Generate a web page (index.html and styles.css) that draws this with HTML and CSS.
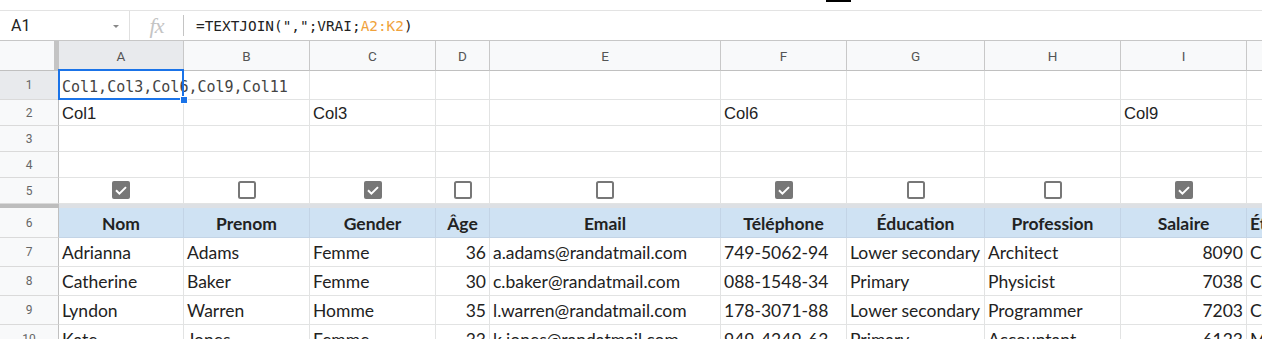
FILE: index.html
```html
<!DOCTYPE html>
<html lang="fr">
<head>
    <meta charset="UTF-8">
    <meta name="viewport" content="width=device-width, initial-scale=1.0">
    <title>Feuille de calcul</title>
    <link rel="stylesheet" href="styles.css">
</head>
<body>
    <div class="top-strip"><span class="tab-mark"></span></div>

    <div class="formula-bar">
        <div class="name-box">
            <span>A1</span>
            <span class="caret"></span>
        </div>
        <div class="fx">fx</div>
        <div class="divider"></div>
        <div class="formula">=TEXTJOIN(",";VRAI;<span class="range">A2:K2</span>)</div>
    </div>

    <div class="sheet">
        <div class="row row-colheads">
            <div class="corner"></div>
            <div class="ch sel">A</div>
            <div class="ch">B</div>
            <div class="ch">C</div>
            <div class="ch">D</div>
            <div class="ch">E</div>
            <div class="ch">F</div>
            <div class="ch">G</div>
            <div class="ch">H</div>
            <div class="ch">I</div>
            <div class="ch">J</div>
        </div>

        <!-- lignes figées -->
        <div class="row row-1">
            <div class="rh sel">1</div>
            <div class="c mono selected">Col1,Col3,Col6,Col9,Col11<span class="handle"></span></div>
            <div class="c"></div>
            <div class="c"></div>
            <div class="c"></div>
            <div class="c"></div>
            <div class="c"></div>
            <div class="c"></div>
            <div class="c"></div>
            <div class="c"></div>
            <div class="c"></div>
        </div>
        <div class="row row-s">
            <div class="rh">2</div>
            <div class="c arial">Col1</div>
            <div class="c"></div>
            <div class="c arial">Col3</div>
            <div class="c"></div>
            <div class="c"></div>
            <div class="c arial">Col6</div>
            <div class="c"></div>
            <div class="c"></div>
            <div class="c arial">Col9</div>
            <div class="c"></div>
        </div>
        <div class="row row-s">
            <div class="rh">3</div>
            <div class="c"></div><div class="c"></div><div class="c"></div><div class="c"></div><div class="c"></div>
            <div class="c"></div><div class="c"></div><div class="c"></div><div class="c"></div><div class="c"></div>
        </div>
        <div class="row row-s">
            <div class="rh">4</div>
            <div class="c"></div><div class="c"></div><div class="c"></div><div class="c"></div><div class="c"></div>
            <div class="c"></div><div class="c"></div><div class="c"></div><div class="c"></div><div class="c"></div>
        </div>
        <div class="row row-s">
            <div class="rh">5</div>
            <div class="c box"><svg class="cb" viewBox="0 0 18 18"><rect width="18" height="18" rx="2" fill="#777"/><path d="M4 9.3l3.4 3.4 6.6-6.6" fill="none" stroke="#fff" stroke-width="2"/></svg></div>
            <div class="c box"><svg class="cb" viewBox="0 0 18 18"><rect x="1" y="1" width="16" height="16" rx="1.5" fill="#fff" stroke="#777" stroke-width="2"/></svg></div>
            <div class="c box"><svg class="cb" viewBox="0 0 18 18"><rect width="18" height="18" rx="2" fill="#777"/><path d="M4 9.3l3.4 3.4 6.6-6.6" fill="none" stroke="#fff" stroke-width="2"/></svg></div>
            <div class="c box"><svg class="cb" viewBox="0 0 18 18"><rect x="1" y="1" width="16" height="16" rx="1.5" fill="#fff" stroke="#777" stroke-width="2"/></svg></div>
            <div class="c box"><svg class="cb" viewBox="0 0 18 18"><rect x="1" y="1" width="16" height="16" rx="1.5" fill="#fff" stroke="#777" stroke-width="2"/></svg></div>
            <div class="c box"><svg class="cb" viewBox="0 0 18 18"><rect width="18" height="18" rx="2" fill="#777"/><path d="M4 9.3l3.4 3.4 6.6-6.6" fill="none" stroke="#fff" stroke-width="2"/></svg></div>
            <div class="c box"><svg class="cb" viewBox="0 0 18 18"><rect x="1" y="1" width="16" height="16" rx="1.5" fill="#fff" stroke="#777" stroke-width="2"/></svg></div>
            <div class="c box"><svg class="cb" viewBox="0 0 18 18"><rect x="1" y="1" width="16" height="16" rx="1.5" fill="#fff" stroke="#777" stroke-width="2"/></svg></div>
            <div class="c box"><svg class="cb" viewBox="0 0 18 18"><rect width="18" height="18" rx="2" fill="#777"/><path d="M4 9.3l3.4 3.4 6.6-6.6" fill="none" stroke="#fff" stroke-width="2"/></svg></div>
            <div class="c"></div>
        </div>

        <div class="freeze"><div class="freeze-head"></div><div></div></div>

        <div class="row row-head">
            <div class="rh">6</div>
            <div class="c hd">Nom</div>
            <div class="c hd">Prenom</div>
            <div class="c hd">Gender</div>
            <div class="c hd">Âge</div>
            <div class="c hd">Email</div>
            <div class="c hd">Téléphone</div>
            <div class="c hd">Éducation</div>
            <div class="c hd">Profession</div>
            <div class="c hd">Salaire</div>
            <div class="c hd left">État civil</div>
        </div>
        <div class="row row-d">
            <div class="rh">7</div>
            <div class="c data">Adrianna</div>
            <div class="c data">Adams</div>
            <div class="c data">Femme</div>
            <div class="c data num">36</div>
            <div class="c data">a.adams@randatmail.com</div>
            <div class="c data">749-5062-94</div>
            <div class="c data">Lower secondary</div>
            <div class="c data">Architect</div>
            <div class="c data num">8090</div>
            <div class="c data">Concubinage</div>
        </div>
        <div class="row row-d">
            <div class="rh">8</div>
            <div class="c data">Catherine</div>
            <div class="c data">Baker</div>
            <div class="c data">Femme</div>
            <div class="c data num">30</div>
            <div class="c data">c.baker@randatmail.com</div>
            <div class="c data">088-1548-34</div>
            <div class="c data">Primary</div>
            <div class="c data">Physicist</div>
            <div class="c data num">7038</div>
            <div class="c data">Concubinage</div>
        </div>
        <div class="row row-d">
            <div class="rh">9</div>
            <div class="c data">Lyndon</div>
            <div class="c data">Warren</div>
            <div class="c data">Homme</div>
            <div class="c data num">35</div>
            <div class="c data">l.warren@randatmail.com</div>
            <div class="c data">178-3071-88</div>
            <div class="c data">Lower secondary</div>
            <div class="c data">Programmer</div>
            <div class="c data num">7203</div>
            <div class="c data">Concubinage</div>
        </div>
        <div class="row row-d">
            <div class="rh">10</div>
            <div class="c data">Kate</div>
            <div class="c data">Jones</div>
            <div class="c data">Femme</div>
            <div class="c data num">33</div>
            <div class="c data">k.jones@randatmail.com</div>
            <div class="c data">949-4249-63</div>
            <div class="c data">Primary</div>
            <div class="c data">Accountant</div>
            <div class="c data num">6123</div>
            <div class="c data">Marié</div>
        </div>
    </div>
</body>
</html>
```

FILE: styles.css
```css
body {
    margin: 0;
    width: 1262px;
    height: 339px;
    overflow: hidden;
    background-color: #fff;
    font-family: Roboto, Arial, sans-serif;
    color: #222;
}

/* bande du haut */
.top-strip {
    height: 10px;
    border-bottom: 1px solid #e3e3e3;
}
.tab-mark {
    display: block;
    margin-left: 826px;
    width: 25px;
    height: 2px;
    background-color: #000;
}

/* barre de formule */
.formula-bar {
    display: flex;
    height: 29px;
    border-bottom: 1px solid #c7c7c7;
}
.name-box {
    width: 130px;
    box-sizing: border-box;
    border-right: 1px solid #e0e0e0;
    display: flex;
    align-items: center;
    justify-content: space-between;
    padding: 0 10px 0 11px;
    font-size: 16px;
    color: #222;
}
.caret {
    width: 0;
    height: 0;
    border-left: 3.5px solid transparent;
    border-right: 3.5px solid transparent;
    border-top: 3.5px solid #888;
    margin-top: 2px;
}
.fx {
    width: 53px;
    display: flex;
    align-items: center;
    justify-content: center;
    font-family: "Liberation Serif", serif;
    font-style: italic;
    font-size: 22px;
    color: #c4c4c4;
    letter-spacing: -1px;
}
.divider {
    width: 1px;
    height: 21px;
    align-self: center;
    background-color: #c4c4c4;
}
.formula {
    display: flex;
    align-items: center;
    padding-left: 12px;
    font-family: "DejaVu Sans Mono", monospace;
    font-size: 14.4px;
    color: #222;
    white-space: pre;
}
.range {
    color: #f0a23c;
}

/* grille */
.sheet {
    overflow: hidden;
}
.row {
    display: grid;
    grid-template-columns: 59px 125px 126px 126px 54px 231px 126px 138px 136px 126px 120px;
}
.row-colheads { height: 30px; }
.row-1 { height: 29px; }
.row-s { height: 26px; }
.row-head { height: 30px; }
.row-d { height: 29px; }

.corner {
    background-color: #f8f9fa;
    border-right: 5px solid #c4c4c4;
    border-bottom: 1px solid #c0c0c0;
}
.ch {
    background-color: #f8f9fa;
    border-right: 1px solid #c8c8c8;
    border-bottom: 1px solid #c0c0c0;
    display: flex;
    align-items: center;
    justify-content: center;
    font-size: 13.5px;
    color: #555;
}
.ch.sel {
    background-color: #e8eaed;
}

.rh {
    background-color: #f8f9fa;
    border-right: 1px solid #c0c0c0;
    border-bottom: 1px solid #dadada;
    display: flex;
    align-items: center;
    justify-content: center;
    font-size: 12px;
    color: #666;
}
.rh.sel {
    background-color: #e8eaed;
}

.c {
    box-sizing: border-box;
    border-right: 1px solid #e2e3e3;
    border-bottom: 1px solid #e2e3e3;
    padding: 0 3px 1px;
    display: flex;
    align-items: flex-end;
    white-space: nowrap;
    overflow: hidden;
}
.mono {
    font-family: "DejaVu Sans Mono", monospace;
    font-size: 15px;
    line-height: 18px;
    color: #444;
    padding-bottom: 3px;
    overflow: visible;
    position: relative;
    z-index: 2;
}
.selected::after {
    content: "";
    position: absolute;
    left: -1px;
    top: -2px;
    right: -1px;
    bottom: -1px;
    border: 2px solid #1a73e8;
}
.handle {
    position: absolute;
    right: -5px;
    bottom: -5px;
    width: 6px;
    height: 6px;
    background-color: #1a73e8;
    border: 1px solid #fff;
    z-index: 3;
}
.arial {
    font-family: "Liberation Sans", Arial, sans-serif;
    font-size: 16.6px;
    line-height: 20px;
    color: #222;
}
.box {
    align-items: center;
    justify-content: center;
    padding: 0 0 1px;
}
.cb {
    width: 18px;
    height: 18px;
}

.freeze {
    display: grid;
    grid-template-columns: 59px 1fr;
    height: 4px;
    background-color: #dde0e4;
}
.freeze-head {
    background-color: #bdbdbd;
}

.data, .hd {
    font-family: Lato, "Noto Sans", sans-serif;
    font-size: 17.5px;
    line-height: 22px;
    padding-bottom: 2px;
    color: #222;
}
.hd {
    background-color: #cfe2f3;
    border-right-color: #c3d4e6;
    border-bottom-color: #c3d4e6;
    font-weight: bold;
    justify-content: center;
}
.hd.left {
    justify-content: flex-start;
}
.num {
    justify-content: flex-end;
}
```
